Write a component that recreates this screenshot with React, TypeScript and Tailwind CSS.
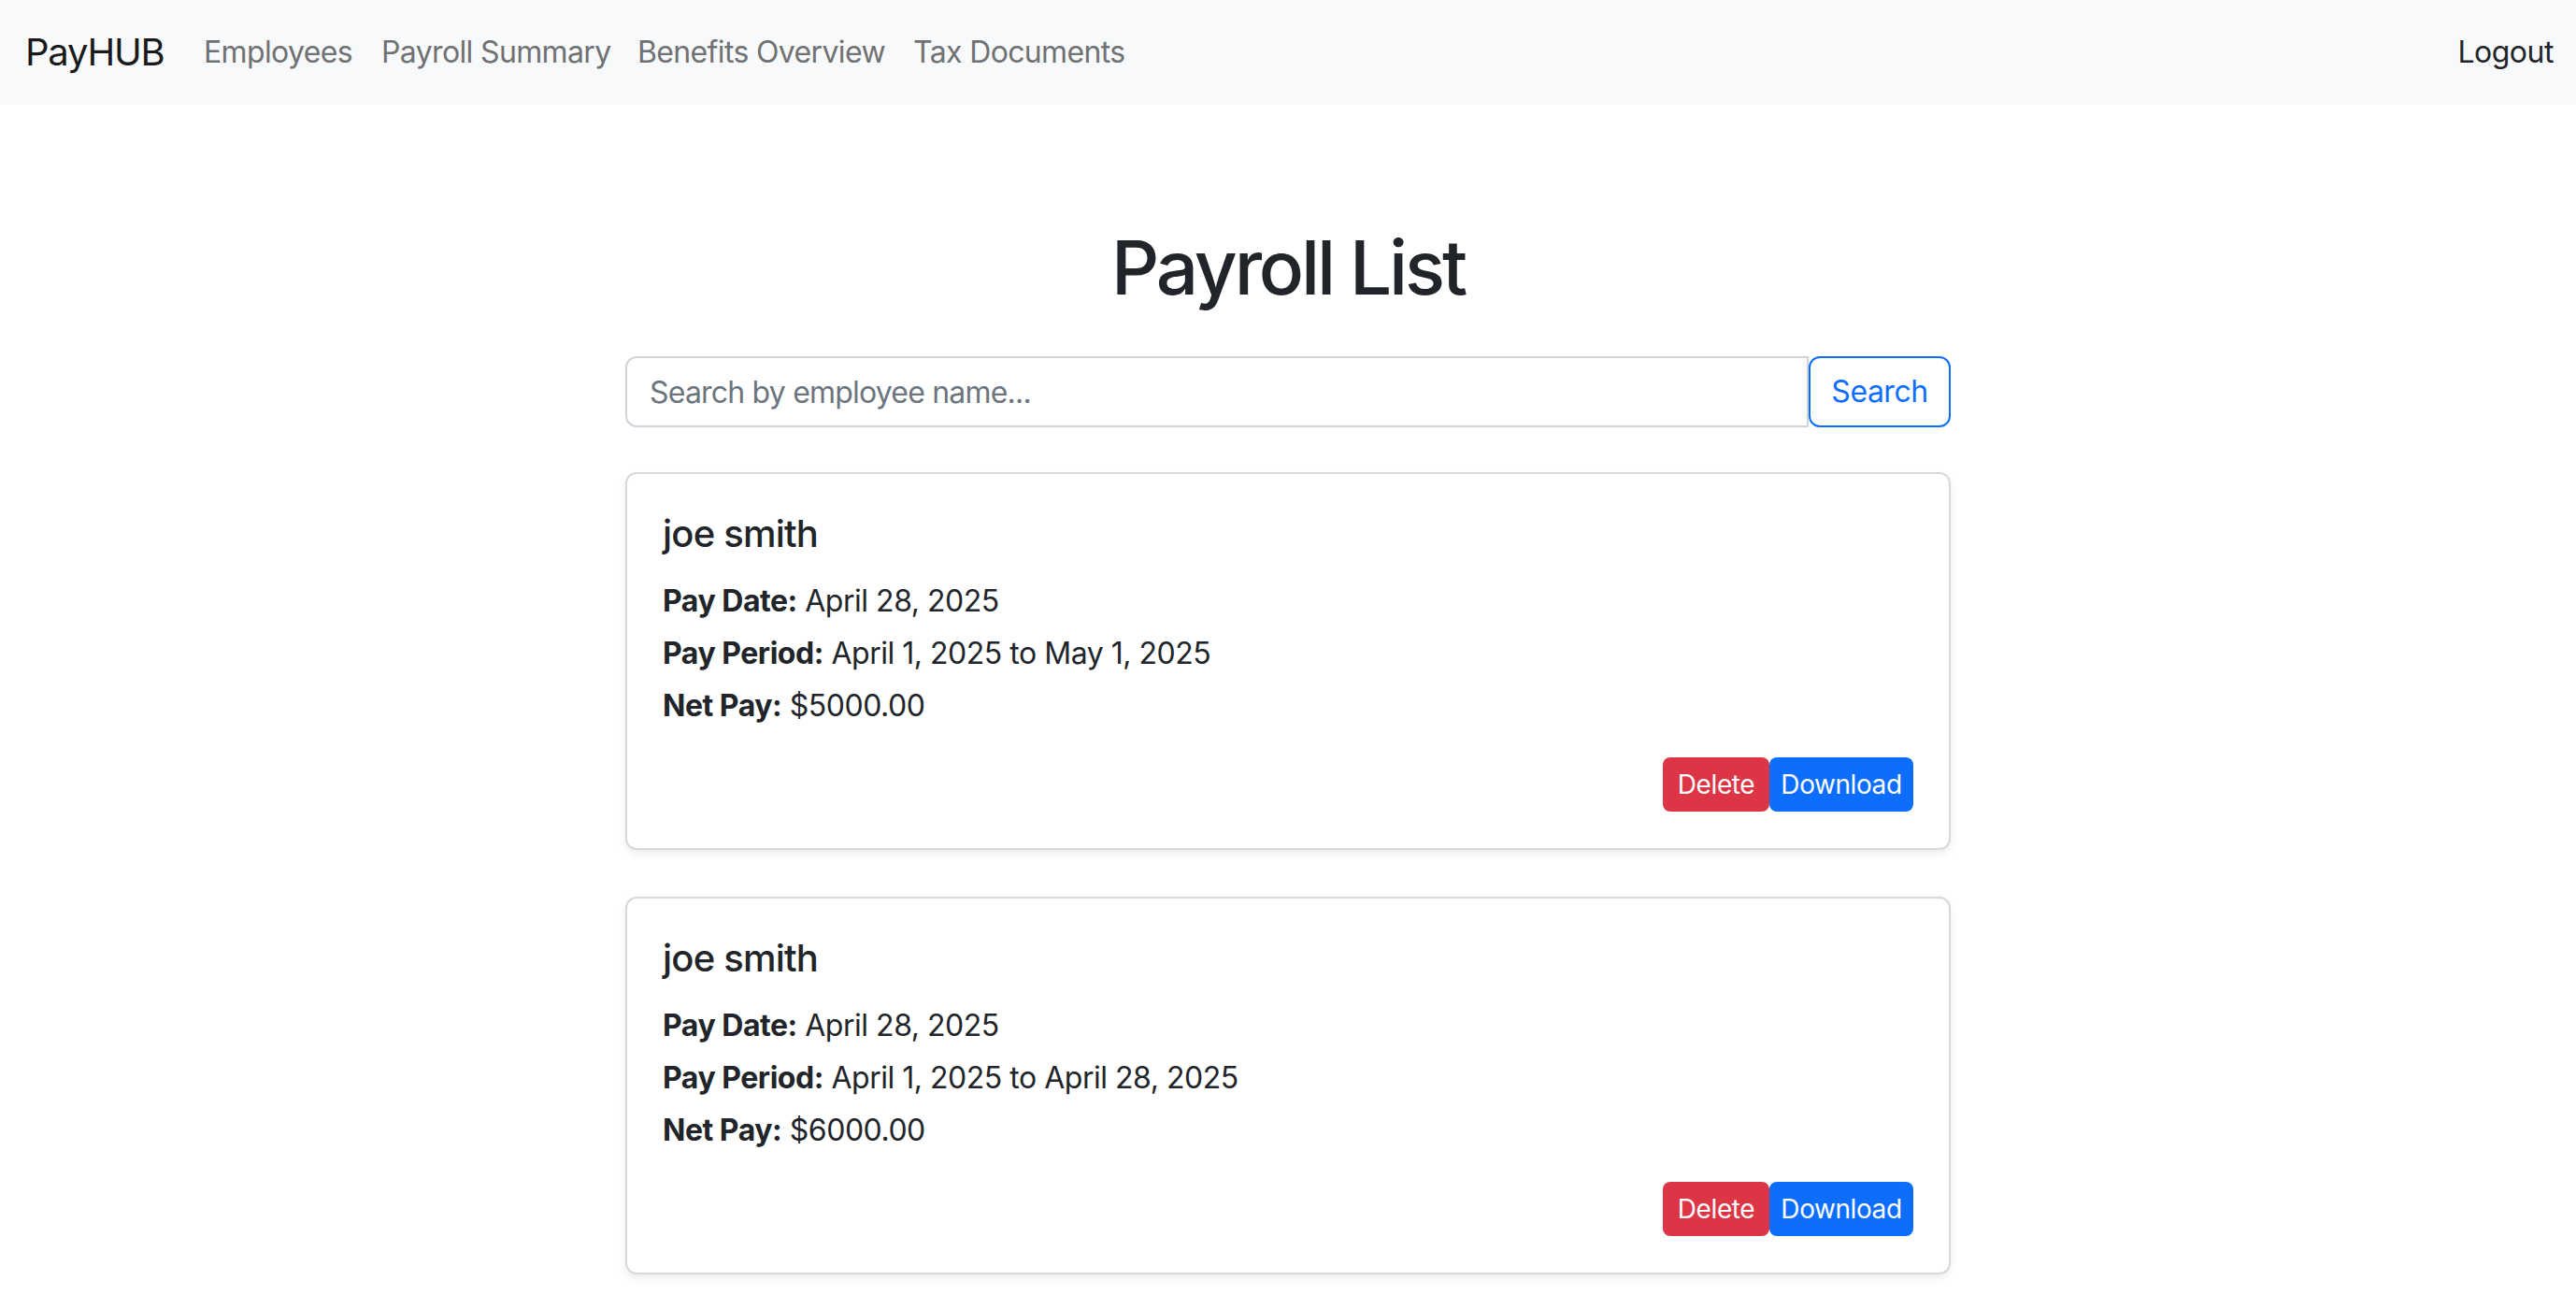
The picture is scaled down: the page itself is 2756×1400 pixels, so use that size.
import React from "react";

const font = { fontFamily: "Inter, 'Noto Sans', 'Liberation Sans', sans-serif" };

type Rec = { date: string; period: string; net: string };

const records: Rec[] = [
  { date: "April 28, 2025", period: "April 1, 2025 to May 1, 2025", net: "$5000.00" },
  { date: "April 28, 2025", period: "April 1, 2025 to April 28, 2025", net: "$6000.00" },
];

function Card({ r }: { r: Rec }) {
  return (
    <div className="bg-white border-2 border-[#d9d9d9] rounded-[12px] shadow-[0_4px_8px_rgba(0,0,0,0.075)] pt-[40px] pb-[39px] px-[38px] mb-[50px]">
      <h5 className="text-[40px] leading-[48px] font-medium text-[#212529] mb-[24px] tracking-[-0.02em]">joe smith</h5>
      <p className="text-[32px] leading-[48px] text-[#212529] mb-[8px] tracking-[-0.015em]">
        <strong className="font-bold">Pay Date:</strong> {r.date}
      </p>
      <p className="text-[32px] leading-[48px] text-[#212529] mb-[8px] tracking-[-0.015em]">
        <strong className="font-bold">Pay Period:</strong> {r.period}
      </p>
      <p className="text-[32px] leading-[48px] text-[#212529] tracking-[-0.015em]">
        <strong className="font-bold">Net Pay:</strong> {r.net}
      </p>
      <div className="flex justify-end mt-[31px]">
        <button className="h-[58px] w-[114px] text-[28px] text-white bg-[#dc3545] rounded-[8px] tracking-[-0.015em]">Delete</button>
        <button className="h-[58px] w-[154px] text-[28px] text-white bg-[#0d6efd] rounded-[8px] tracking-[-0.015em]">Download</button>
      </div>
    </div>
  );
}

export default function App() {
  return (
    <div className="min-h-[1400px] bg-white" style={font}>
      <nav className="h-[112px] bg-[#f8f9fa] flex items-center px-[24px]">
        <span className="text-[40px] text-[#1a1a1a] w-[194px] pl-[3px] tracking-[-0.03em]">PayHUB</span>
        <div className="flex text-[32px] text-[#707172] tracking-[-0.02em]">
          <a className="w-[190px]">Employees</a>
          <a className="w-[274px]">Payroll Summary</a>
          <a className="w-[295px]">Benefits Overview</a>
          <a>Tax Documents</a>
        </div>
        <a className="ml-auto text-[32px] text-[#212529] tracking-[-0.015em]">Logout</a>
      </nav>
      <main className="w-[1418px] mx-auto pt-[126px]">
        <h1 className="text-[80px] leading-[96px] font-medium text-[#212529] text-center mb-[47px] tracking-[-0.04em]">Payroll List</h1>
        <div className="flex h-[76px] mb-[48px]">
          <input
            className="flex-1 h-full border-2 border-[#ced4da] rounded-l-[12px] px-[24px] text-[32px] text-[#212529] placeholder:text-[#6c757d] outline-none tracking-[-0.025em]"
            placeholder="Search by employee name..."
          />
          <button className="h-full w-[152px] border-2 border-[#0d6efd] rounded-[12px] text-[32px] text-[#0d6efd] tracking-[-0.015em]">Search</button>
        </div>
        {records.map((r, i) => (
          <Card key={i} r={r} />
        ))}
      </main>
    </div>
  );
}
